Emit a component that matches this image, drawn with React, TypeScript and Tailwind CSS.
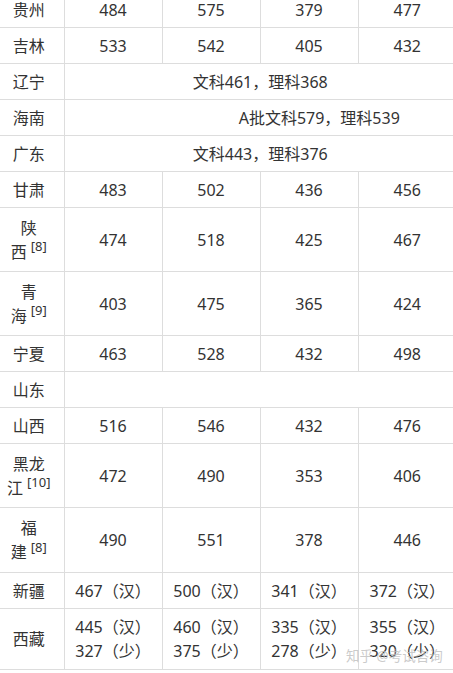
import React from "react";

type Row = {
  name: React.ReactNode;
  cells?: React.ReactNode[];
  merged?: React.ReactNode;
  mergedClass?: string;
  tall?: string;
};

function Sup({ n }: { n: number }) {
  return <sup className="ml-[4px] text-[13px]">[{n}]</sup>;
}

// province name that wraps onto two lines with a footnote on the last char
function Wrapped({ head, tail, n }: { head: string; tail: string; n: number }) {
  return (
    <>
      {head}
      <span className="whitespace-nowrap">
        {tail}
        <Sup n={n} />
      </span>
    </>
  );
}

function Two({ a, b }: { a: string; b: string }) {
  return (
    <>
      {a}
      <br />
      {b}
    </>
  );
}

const rows: Row[] = [
  { name: "贵州", cells: ["484", "575", "379", "477"] },
  { name: "吉林", cells: ["533", "542", "405", "432"] },
  { name: "辽宁", merged: "文科461，理科368" },
  { name: "海南", merged: "A批文科579，理科539", mergedClass: "pl-[124px]" },
  { name: "广东", merged: "文科443，理科376" },
  { name: "甘肃", cells: ["483", "502", "436", "456"] },
  { name: <Wrapped head="陕" tail="西" n={8} />, cells: ["474", "518", "425", "467"], tall: "h-[64px]" },
  { name: <Wrapped head="青" tail="海" n={9} />, cells: ["403", "475", "365", "424"], tall: "h-[64px]" },
  { name: "宁夏", cells: ["463", "528", "432", "498"] },
  { name: "山东", merged: "" },
  { name: "山西", cells: ["516", "546", "432", "476"] },
  { name: <Wrapped head="黑龙" tail="江" n={10} />, cells: ["472", "490", "353", "406"], tall: "h-[64px]" },
  { name: <Wrapped head="福" tail="建" n={8} />, cells: ["490", "551", "378", "446"], tall: "h-[65px]" },
  { name: "新疆", cells: ["467（汉）", "500（汉）", "341（汉）", "372（汉）"], tall: "h-[35px]" },
  {
    name: "西藏",
    cells: [
      <Two a="445（汉）" b="327（少）" />,
      <Two a="460（汉）" b="375（少）" />,
      <Two a="335（汉）" b="278（少）" />,
      <Two a="355（汉）" b="320（少）" />,
    ],
    tall: "h-[61px]",
  },
];

const td = "border border-[#dddddd] py-[5.5px] px-[6px] text-center align-middle";

export default function App() {
  return (
    <div
      className="relative h-[673px] w-[453px] overflow-hidden bg-white text-[16px] leading-6 text-[#333333]"
      style={{ fontFamily: '"Noto Sans", "Noto Sans CJK SC", sans-serif' }}
    >
      <table className="-mt-[9px] w-[456px] table-fixed border-collapse">
        <colgroup>
          <col className="w-[64px]" />
          <col className="w-[98px]" />
          <col className="w-[98px]" />
          <col className="w-[98px]" />
          <col className="w-[98px]" />
        </colgroup>
        <tbody>
          {rows.map((r, i) => (
            <tr key={i} className={r.tall ?? "h-[36px]"}>
              <td className={`${td} border-l-0 pl-[6px] pr-[12px]`}>{r.name}</td>
              {r.merged !== undefined ? (
                <td colSpan={4} className={`${td} border-r-0 ${r.mergedClass ?? ""}`}>
                  {r.merged}
                </td>
              ) : (
                r.cells!.map((c, j) => (
                  <td key={j} className={`${td} ${j === 3 ? "border-r-0" : ""}`}>
                    {c}
                  </td>
                ))
              )}
            </tr>
          ))}
        </tbody>
      </table>

      {/* site watermark */}
      <span className="pointer-events-none absolute left-[346px] top-[644px] whitespace-nowrap text-[13.5px] text-[#bdbdbd]/80">
        知乎 @考试咨询
      </span>
    </div>
  );
}
